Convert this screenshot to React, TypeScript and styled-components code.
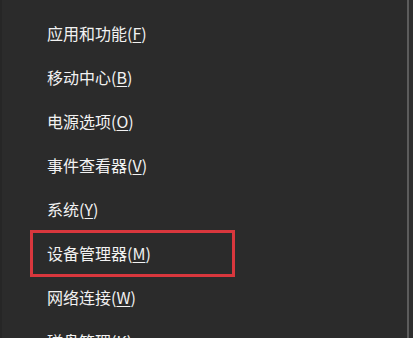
import styled, { createGlobalStyle } from "styled-components";

const GlobalStyle = createGlobalStyle`
  html, body {
    margin: 0;
    padding: 0;
    background: #2b2b2b;
  }
`;

const Screen = styled.div`
  width: 413px;
  height: 338px;
  overflow: hidden;
  display: flex;
  background: #2b2b2b;
`;

const Menu = styled.ul`
  flex: 1;
  list-style: none;
  margin: 0;
  padding: 11px 0 0 0;
  border-left: 2px solid #262626;
`;

const Edge = styled.div`
  width: 4px;
  border-left: 2px solid #5c5c5c;
  background: #2e2e2e;
`;

const Item = styled.li<{ $boxed?: boolean }>`
  position: relative;
  height: 44px;
  display: flex;
  align-items: center;
  padding-left: 45px;
  font-family: "Noto Sans CJK SC", "Noto Sans", sans-serif;
  font-size: 16px;
  color: #f2f2f2;
  white-space: nowrap;

  &::after {
    content: "";
    display: ${(p) => (p.$boxed ? "block" : "none")};
    position: absolute;
    left: 28px;
    top: -1px;
    width: 205px;
    height: 47px;
    box-sizing: border-box;
    border: 3px solid #d8373d;
  }
`;

const Key = styled.span`
  text-decoration: underline;
  text-underline-offset: 2px;
`;

const items = [
  { label: "应用和功能", key: "F" },
  { label: "移动中心", key: "B" },
  { label: "电源选项", key: "O" },
  { label: "事件查看器", key: "V" },
  { label: "系统", key: "Y" },
  { label: "设备管理器", key: "M", boxed: true },
  { label: "网络连接", key: "W" },
  { label: "磁盘管理", key: "K" },
];

export default function App() {
  return (
    <>
      <GlobalStyle />
      <Screen>
        <Menu>
          {items.map((it) => (
            <Item key={it.key} $boxed={it.boxed}>
              {it.label}(<Key>{it.key}</Key>)
            </Item>
          ))}
        </Menu>
        <Edge />
      </Screen>
    </>
  );
}
